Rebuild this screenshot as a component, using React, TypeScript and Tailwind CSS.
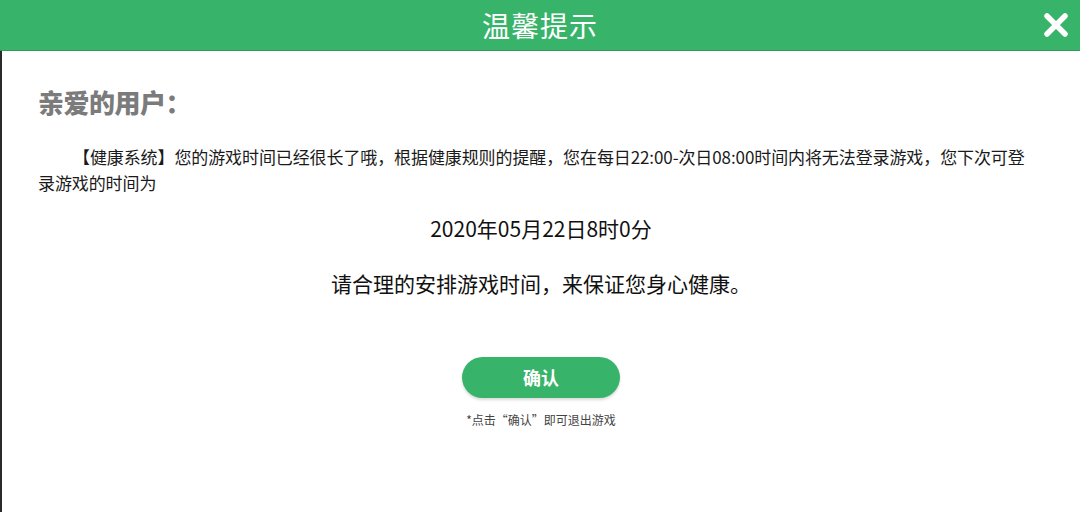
import React from "react";

export default function App() {
  const font = { fontFamily: '"Noto Sans CJK SC", "Noto Sans", sans-serif' };
  return (
    <div className="w-[1080px] h-[512px] bg-white flex flex-col overflow-hidden" style={font}>
      <div className="h-[51px] bg-[#38b36a] border-b border-[#2e9d5b] flex items-center justify-center relative">
        <span className="text-white text-[28px] leading-none tracking-[1px]">温馨提示</span>
        <svg className="absolute right-[11px] top-[12px]" width="26" height="26" viewBox="0 0 26 26">
          <path d="M4 4 L22 22 M22 4 L4 22" stroke="white" strokeWidth="5.5" strokeLinecap="round" />
        </svg>
      </div>
      <div className="flex-1 border-l-2 border-[#2a2a2a] flex flex-col px-[36px]">
        <div className="mt-[33px] h-[36px] leading-[36px] text-[26px] font-black text-[#7b7b7b] tracking-[-0.5px]">
          亲爱的用户：
        </div>
        <p className="mt-[24px] text-[17px] leading-[26px] text-[#1a1a1a] indent-[35px] whitespace-nowrap tracking-[-0.1px]">
          【健康系统】您的游戏时间已经很长了哦，根据健康规则的提醒，您在每日22:00-次日08:00时间内将无法登录游戏，您下次可登
          <br />
          <span className="-ml-[35px] inline-block">录游戏的时间为</span>
        </p>
        <div className="mt-[17px] text-center text-[21px] leading-[30px] text-[#111]">2020年05月22日8时0分</div>
        <div className="mt-[25px] text-center text-[21px] leading-[30px] text-[#111]">
          请合理的安排游戏时间，来保证您身心健康。
        </div>
        <div className="mt-[59px] flex justify-center">
          <button className="w-[158px] h-[41px] rounded-full bg-[#38b36a] text-white text-[18px] font-bold shadow-[0_2px_3px_rgba(0,0,0,0.15)]">
            确认
          </button>
        </div>
        <div className="mt-[13px] text-center text-[12px] leading-[18px] text-[#444]">*点击“确认”即可退出游戏</div>
      </div>
    </div>
  );
}
